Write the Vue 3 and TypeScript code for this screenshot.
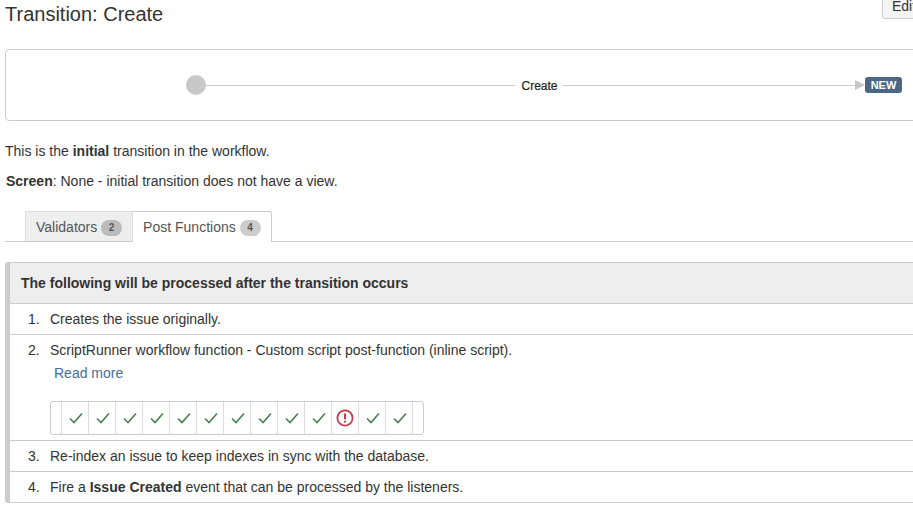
<script setup lang="ts">
const marks = [1, 1, 1, 1, 1, 1, 1, 1, 1, 1, 0, 1, 1]
</script>

<template>
  <div class="page">
    <header class="head">
      <h1 class="title">Transition: Create</h1>
      <button class="edit">Edit</button>
    </header>

    <section class="diagram">
      <span class="dot"></span>
      <span class="line before"></span>
      <span class="name">Create</span>
      <span class="line after"></span>
      <span class="arrow"></span>
      <span class="lozenge">NEW</span>
    </section>

    <p class="intro">This is the <b>initial</b> transition in the workflow.</p>
    <p class="screen"><b>Screen</b>: None - initial transition does not have a view.</p>

    <nav class="tabs">
      <div class="tab">Validators <span class="count dark">2</span></div>
      <div class="tab active">Post Functions <span class="count">4</span></div>
    </nav>

    <section class="panel">
      <div class="panel-head">The following will be processed after the transition occurs</div>
      <div class="row"><span class="num">1.</span><span>Creates the issue originally.</span></div>
      <div class="row tall">
        <div class="row-main">
          <span class="num">2.</span><span>ScriptRunner workflow function - Custom script post-function (inline script).</span>
        </div>
        <a class="more">Read more</a>
        <div class="history">
          <span v-for="(m, i) in marks" :key="i" class="cell">
            <svg v-if="m" class="check" width="14" height="12" viewBox="0 0 14 12">
              <path d="M1 6.5 L5 10.5 L13 1.5" fill="none" stroke="#46824f" stroke-width="1.6" />
            </svg>
            <svg v-else width="18" height="18" viewBox="0 0 18 18">
              <circle cx="9" cy="9" r="7.6" fill="none" stroke="#c23b48" stroke-width="1.8" />
              <path d="M9 4.6 V10.2 M9 11.8 V13.6" fill="none" stroke="#c23b48" stroke-width="2" />
            </svg>
          </span>
        </div>
      </div>
      <div class="row"><span class="num">3.</span><span>Re-index an issue to keep indexes in sync with the database.</span></div>
      <div class="row"><span class="num">4.</span><span>Fire a <b>Issue Created</b> event that can be processed by the listeners.</span></div>
    </section>
  </div>
</template>

<style>
html, body { margin: 0; overflow: hidden; background: #fff; }
</style>

<style scoped>
.page {
  box-sizing: border-box;
  width: 935px;
  height: 520px;
  padding-left: 5px;
  font-family: "Liberation Sans", Arial, sans-serif;
  font-size: 14px;
  line-height: 20px;
  color: #333;
}
.head { display: flex; justify-content: space-between; align-items: flex-start; height: 49px; }
.title { margin: 3px 0 0; font-size: 20px; font-weight: 400; line-height: 22px; }
.edit {
  box-sizing: border-box;
  height: 23px;
  width: 53px;
  margin: -4px 0 0;
  padding: 0 0 4px 9px;
  border: 1px solid #ccc;
  border-radius: 3px;
  background: #f5f5f5;
  font: 14px/16px "Liberation Sans", Arial, sans-serif;
  color: #333;
  text-align: left;
}
.diagram {
  box-sizing: border-box;
  height: 72px;
  display: flex;
  align-items: center;
  padding: 0 32px 0 180px;
  border: 1px solid #ccc;
  border-radius: 4px;
}
.dot { width: 20px; height: 20px; border-radius: 50%; background: #c8c8c8; flex: none; }
.line { height: 1px; background: #ccc; }
.line.before { flex: 308; }
.line.after { flex: 292; }
.name { padding: 1px 5px 0 7px; font-size: 12px; font-weight: 400; line-height: 16px; color: #222; -webkit-text-stroke: 0.2px #222; }
.arrow { width: 0; height: 0; border-left: 10px solid #c8c8c8; border-top: 5px solid transparent; border-bottom: 5px solid transparent; flex: none; }
.lozenge {
  box-sizing: border-box;
  width: 37px;
  height: 16px;
  border-radius: 3px;
  background: #4a6785;
  color: #fff;
  font-size: 11px;
  font-weight: 700;
  line-height: 16px;
  text-align: center;
  flex: none;
}
.intro { margin: 20px 0 0; }
.screen { margin: 10px 0 0 1px; }
.tabs {
  display: flex;
  align-items: flex-start;
  height: 30px;
  margin-top: 20px;
  padding-left: 20px;
  border-bottom: 1px solid #ccc;
}
.tab {
  box-sizing: border-box;
  height: 30px;
  padding: 5px 10px 0;
  background: #eee;
  border: 1px solid #ddd;
  border-bottom: 0;
  color: #555;
  white-space: pre;
}
.tab.active {
  height: 31px;
  background: #fff;
  border-color: #ccc;
  border-left: 0;
  border-radius: 0 3px 0 0;
}
.count {
  display: inline-block;
  min-width: 21px;
  height: 16px;
  border-radius: 8px;
  background: #ccc;
  color: #555;
  font-size: 10px;
  font-weight: 700;
  line-height: 16px;
  text-align: center;
  vertical-align: 1px;
}
.count.dark { background: #bbb; }
.panel {
  margin-top: 20px;
  border: 1px solid #ccc;
  border-left: 5px solid #ccc;
  border-radius: 3px;
}
.panel-head {
  box-sizing: border-box;
  height: 41px;
  padding: 10px 11px;
  background: #eee;
  border-bottom: 1px solid #ccc;
  font-weight: 700;
}
.row {
  box-sizing: border-box;
  display: flex;
  height: 31px;
  padding: 5px 0 0 14px;
  border-bottom: 1px solid #ccc;
}
.row:last-child { border-bottom: 0; height: 30px; }
.row.tall { display: block; height: 106px; }
.row-main { display: flex; }
.num { flex: none; width: 26px; padding-left: 4px; box-sizing: border-box; }
.more { display: block; margin: 3px 0 0 30px; color: #456f9b; }
.history {
  box-sizing: border-box;
  display: flex;
  width: 374px;
  height: 34px;
  margin: 18px 0 0 26px;
  padding-left: 10px;
  border: 1px solid #ccc;
  border-radius: 3px;
}
.cell {
  box-sizing: border-box;
  display: flex;
  align-items: center;
  justify-content: center;
  width: 27px;
  height: 32px;
  border-left: 1px solid #ddd;
}
.cell:last-child { border-right: 1px solid #ddd; width: 28px; }
.check { margin-left: 1px; }
</style>
